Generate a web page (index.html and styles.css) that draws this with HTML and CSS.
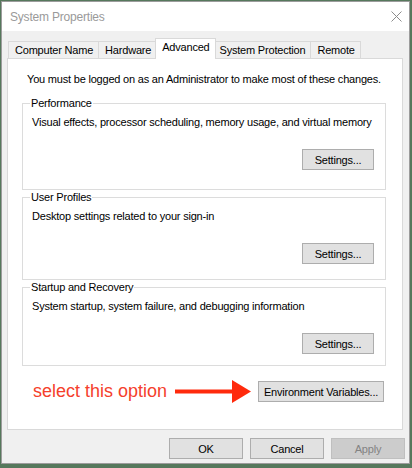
FILE: index.html
```html
<!DOCTYPE html>
<html lang="en">
<head>
  <meta charset="UTF-8" />
  <meta name="viewport" content="width=device-width, initial-scale=1.0"/>
  <title>System Properties</title>
  <link rel="stylesheet" href="styles.css">
</head>
<body>

  <div class="window">
    <div class="titlebar">
      <span class="title">System Properties</span>
      <svg class="close" width="11" height="11" viewBox="0 0 11 11">
        <path d="M0.5 0.5L10.5 10.5M10.5 0.5L0.5 10.5" stroke="#8c8c8c" stroke-width="1" fill="none"/>
      </svg>
    </div>

    <div class="content">
      <div class="tabs">
        <div class="tab">Computer Name</div>
        <div class="tab">Hardware</div>
        <div class="tab active">Advanced</div>
        <div class="tab">System Protection</div>
        <div class="tab">Remote</div>
      </div>

      <div class="panel">
        <p class="note">You must be logged on as an Administrator to make most of these changes.</p>

        <fieldset class="group">
          <legend>Performance</legend>
          <p>Visual effects, processor scheduling, memory usage, and virtual memory</p>
          <div class="actions"><button class="btn settings">Settings...</button></div>
        </fieldset>

        <fieldset class="group group-users">
          <legend>User Profiles</legend>
          <p>Desktop settings related to your sign-in</p>
          <div class="actions"><button class="btn settings">Settings...</button></div>
        </fieldset>

        <fieldset class="group group-startup">
          <legend>Startup and Recovery</legend>
          <p>System startup, system failure, and debugging information</p>
          <div class="actions"><button class="btn settings">Settings...</button></div>
        </fieldset>

        <div class="env-row">
          <span class="hint">select this option</span>
          <svg class="arrow" width="77" height="23" viewBox="0 0 77 23">
            <rect x="0" y="9.5" width="59" height="4" fill="#ff2a0c"/>
            <polygon points="57,0 76,11.5 57,23" fill="#ff2a0c"/>
          </svg>
          <button class="btn env">Environment Variables...</button>
        </div>
      </div>

      <div class="footer">
        <button class="btn">OK</button>
        <button class="btn">Cancel</button>
        <button class="btn" disabled>Apply</button>
      </div>
    </div>
  </div>

</body>
</html>
```

FILE: styles.css
```css
* { box-sizing: border-box; }
body {
  margin: 0;
  background: #56785c;
  font-family: "Liberation Sans", Arial, sans-serif;
  font-size: 11px;
  letter-spacing: -0.2px;
  color: #000;
  white-space: nowrap;
}
.window {
  margin: 1px 2px 0 1px;
  height: 463px;
  background: #f0f0f0;
  border: 1px solid #9c9c9c;
}
.titlebar {
  height: 29px;
  background: #fff;
  display: flex;
  align-items: center;
  justify-content: space-between;
  padding: 0 7px 0 8px;
}
.title {
  color: #9a9a9a;
  font-size: 12px;
}
.content {
  padding: 7px 4px 0 5px;
}
.tabs {
  display: flex;
  align-items: flex-end;
  height: 20px;
  padding-left: 1px;
}
.tab {
  height: 17px;
  line-height: 15px;
  padding: 1px 5px 0 6px;
  border: 1px solid #d9d9d9;
  border-bottom: none;
  margin-left: -1px;
  background: #f0f0f0;
}
.tab:first-child { margin-left: 0; }
.tab.active {
  position: relative;
  z-index: 1;
  height: 21px;
  padding-top: 1px;
  margin: 0 -2px -1px -2px;
  background: #fff;
}
.panel {
  height: 372px;
  margin-right: 2px;
  background: #fff;
  border: 1px solid #d9d9d9;
  padding: 13px 16px 0 14px;
}
.note {
  margin: 0 0 0 5px;
  line-height: 15px;
}
.group {
  margin: 9px 0 0;
  padding: 0 11px 19px 9px;
  border: 1px solid #dcdcdc;
  min-width: 0;
}
.group + .group { margin-top: 0; }
.group-users { padding-bottom: 15px; }
.group-startup { padding-bottom: 11px; }
.group legend {
  padding: 0 1px;
  margin-left: -2px;
  line-height: 15px;
}
.group p {
  margin: 4px 0 0;
  line-height: 15px;
}
.actions {
  display: flex;
  justify-content: flex-end;
  margin-top: 19px;
}
.btn {
  height: 21px;
  width: 74px;
  padding: 0;
  font: inherit;
  letter-spacing: inherit;
  color: #000;
  background: #e1e1e1;
  border: 1px solid #adadad;
  border-radius: 0;
}
.btn.settings { width: 72px; }
.btn.env {
  width: 126px;
  margin-right: 2px;
}
.btn:disabled {
  background: #cccccc;
  border-color: #bfbfbf;
  color: #838383;
}
.env-row {
  display: flex;
  align-items: center;
  justify-content: flex-end;
  margin-top: 14px;
}
.hint {
  font-size: 18px;
  letter-spacing: 0;
  color: #f5402c;
  margin-right: 8px;
}
.arrow { margin-right: 6px; }
.footer {
  display: flex;
  justify-content: flex-end;
  gap: 7px;
  padding-top: 8px;
}
```
